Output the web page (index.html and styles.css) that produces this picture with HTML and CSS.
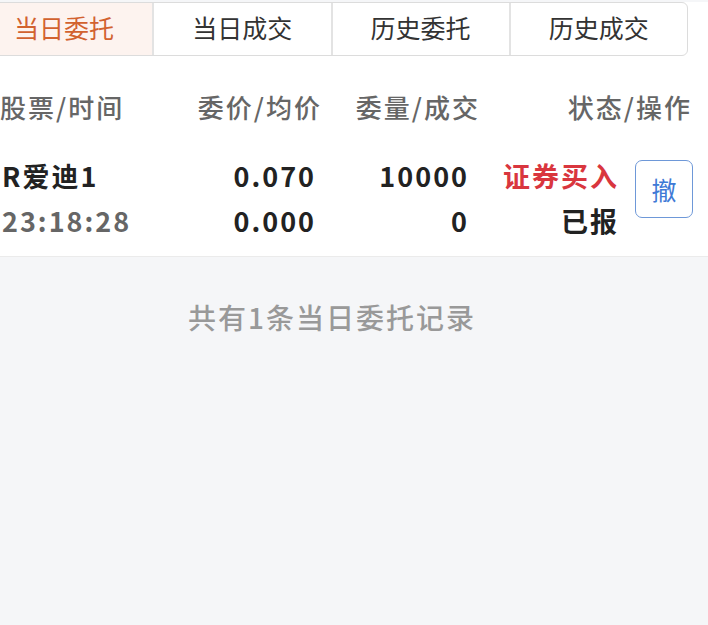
FILE: index.html
```html
<!DOCTYPE html>
<html lang="zh-CN">
  <head>
    <meta charset="UTF-8" />
    <meta name="viewport" content="width=device-width, initial-scale=1.0" />
    <title>当日委托</title>
    <link rel="stylesheet" href="styles.css">
  </head>
  <body>
    <div class="page">
      <div class="tabs">
        <div class="tab active">当日委托</div>
        <div class="tab">当日成交</div>
        <div class="tab">历史委托</div>
        <div class="tab">历史成交</div>
      </div>

      <div class="list-head">
        <span class="c1">股票/时间</span>
        <span class="c2">委价/均价</span>
        <span class="c3">委量/成交</span>
        <span class="c4">状态/操作</span>
      </div>

      <div class="order">
        <div class="c1">
          <div class="name">R爱迪1</div>
          <div class="time">23:18:28</div>
        </div>
        <div class="c2">
          <div>0.070</div>
          <div>0.000</div>
        </div>
        <div class="c3">
          <div>10000</div>
          <div>0</div>
        </div>
        <div class="c4">
          <div class="buy">证券买入</div>
          <div>已报</div>
        </div>
        <button class="cancel-btn">撤</button>
      </div>
    </div>

    <div class="summary">
      <p>共有1条当日委托记录</p>
    </div>
  </body>
</html>
```

FILE: styles.css
```css
* {
  margin: 0;
  padding: 0;
  box-sizing: border-box;
}

html,
body {
  height: 100%;
}

body {
  font-family: "Noto Sans CJK SC", "Noto Sans", sans-serif;
  background: #f5f6f8;
  color: #333;
  overflow: hidden;
}

.page {
  background: #fff;
  border-bottom: 1px solid #ebebeb;
}

.tabs {
  display: flex;
  margin: 2px 20px 0 -25px;
  height: 54px;
  border: 1px solid #dcdcdc;
  border-radius: 6px;
  overflow: hidden;
}

.tab {
  flex: 1;
  display: flex;
  justify-content: center;
  align-items: center;
  padding-bottom: 4px;
  font-size: 25px;
  color: #333;
  border-left: 2px solid #e3e3e3;
}

.tab:first-child {
  border-left: none;
}

.tab.active {
  background: #fdf3ef;
  color: #d2622f;
}

.list-head {
  display: grid;
  grid-template-columns: 170px 150px 158px 212px;
  margin-top: 31px;
  height: 38px;
  align-items: center;
  font-size: 26px;
  font-weight: 500;
  color: #666;
  letter-spacing: 2px;
  white-space: nowrap;
}

.list-head span,
.order .c2,
.order .c3,
.order .c4 {
  text-align: right;
}

.list-head .c1 {
  text-align: left;
}

.list-head span {
  margin-right: -2px;
}

.order {
  display: grid;
  grid-template-columns: 200px 114px 153px 150px 58px;
  align-items: center;
  padding: 28px 0 13px;
  font-size: 27px;
  font-weight: 700;
  color: #222;
  white-space: nowrap;
}

.order > div > div {
  line-height: 45px;
  letter-spacing: 2px;
  margin-right: -2px;
}

.order .c1 {
  padding-left: 2px;
}

.order .time {
  color: #666;
}

.order .buy {
  color: #d9363e;
}

.cancel-btn {
  align-self: start;
  margin: 7px 0 0 18px;
  width: 58px;
  height: 58px;
  background: #fff;
  border: 1px solid #6e98d8;
  border-radius: 7px;
  color: #3f7ad6;
  font-family: inherit;
  font-size: 25px;
  cursor: pointer;
}

.summary {
  padding: 40px 44px 0 0;
  text-align: center;
}

.summary p {
  font-size: 28px;
  font-weight: 500;
  color: #999;
  letter-spacing: 2px;
}
```
